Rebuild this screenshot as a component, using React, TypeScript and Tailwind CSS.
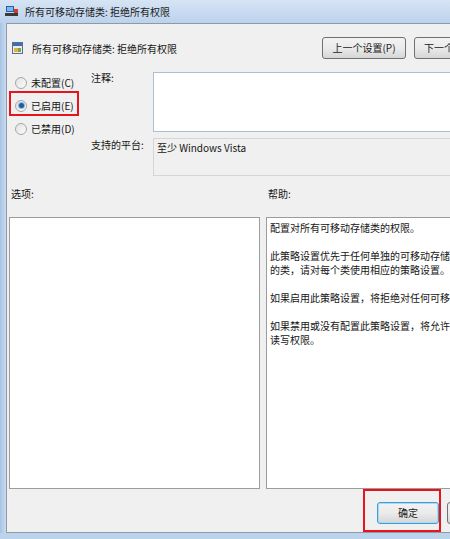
import React from 'react';

const font = "font-['Noto_Sans_CJK_SC','Noto_Sans',sans-serif]";

function Radio({ label, checked }: { label: string; checked?: boolean }) {
  return (
    <div className="flex h-[23px] items-center gap-[4px]">
      <span className="flex h-[12px] w-[12px] items-center justify-center rounded-full border border-[#a7a7a7] bg-gradient-to-br from-[#e2e2e2] to-[#fbfbfb]">
        {checked && <span className="h-[5px] w-[5px] rounded-full bg-[#1d5e9a] ring-1 ring-[#8dbbe4]" />}
      </span>
      <span>{label}</span>
    </div>
  );
}

function WinButton({ children, focused, w }: { children: React.ReactNode; focused?: boolean; w: string }) {
  return (
    <button
      className={`${w} h-[22px] rounded-[3px] border ${
        focused ? 'border-[#3c9fd6] shadow-[inset_0_0_0_1px_#a6dbf6]' : 'border-[#707070]'
      } bg-gradient-to-b from-[#f2f2f2] via-[#ebebeb] to-[#d6d6d6] text-[10px] leading-none text-[#1a1a1a]`}
    >
      {children}
    </button>
  );
}

export default function App() {
  const help = [
    '配置对所有可移动存储类的权限。',
    '',
    '此策略设置优先于任何单独的可移动存储设备',
    '的类，请对每个类使用相应的策略设置。',
    '',
    '如果启用此策略设置，将拒绝对任何可移动存储',
    '',
    '如果禁用或没有配置此策略设置，将允许对任何',
    '读写权限。',
  ];

  return (
    <div className={`${font} h-[539px] w-[450px] overflow-hidden bg-[#bcd3ec] text-[10px] text-[#161616]`}>
      {/* title bar */}
      <div className="flex h-[23px] items-center gap-[6px] bg-gradient-to-b from-[#d6e4f4] to-[#bcd2ec] pl-[5px]">
        <svg width="14" height="13" viewBox="0 0 14 13">
          <rect x="1" y="1" width="8" height="6" fill="#2a5fa8" />
          <rect x="2" y="2" width="6" height="4" fill="#7fb6ee" />
          <rect x="0" y="8" width="13" height="3" fill="#3a3a3a" />
          <rect x="9" y="4" width="4" height="4" fill="#d23a2a" />
        </svg>
        <span className="text-[#1b1b1b]">所有可移动存储类: 拒绝所有权限</span>
      </div>

      <div className="flex h-[510px]">
        <div className="w-[6px] shrink-0 bg-gradient-to-r from-[#a9c3e2] to-[#c8dcf1]" />
        {/* dialog body */}
        <div className="flex w-[560px] shrink-0 flex-col border border-[#8e9aa8] bg-[#f0f0f0]">
          {/* header */}
          <div className="mt-[13px] flex h-[22px] items-center">
            <div className="flex w-[315px] items-center gap-[9px] pl-[5px]">
              <svg width="11" height="12" viewBox="0 0 11 12">
                <rect x="0.5" y="0.5" width="10" height="11" fill="#e8eef6" stroke="#5a6f8c" />
                <rect x="1" y="1" width="9" height="3" fill="#3f6fb0" />
                <rect x="2" y="6" width="4" height="4" fill="#e3b341" />
                <rect x="6" y="6" width="3" height="4" fill="#7aa64a" />
              </svg>
              <span>所有可移动存储类: 拒绝所有权限</span>
            </div>
            <div className="flex gap-[8px]">
              <WinButton w="w-[84px]">上一个设置(P)</WinButton>
              <WinButton w="w-[84px]">下一个设置(N)</WinButton>
            </div>
          </div>

          {/* state + comment + platform */}
          <div className="flex">
            <div className="w-[84px] shrink-0 pl-[8px] pt-[12px]">
              <Radio label="未配置(C)" />
              <div className="relative">
                <Radio label="已启用(E)" checked />
                <div className="absolute -left-[6px] -top-[3px] h-[25px] w-[70px] border-2 border-[#e8141b]" />
              </div>
              <Radio label="已禁用(D)" />
            </div>
            <div className="flex flex-col gap-[6px] pt-[13px]">
              <div className="flex">
                <span className="w-[62px] shrink-0 leading-[12px]">注释:</span>
                <div className="h-[60px] w-[400px] border border-[#abc0d8] bg-white" />
              </div>
              <div className="flex">
                <span className="w-[62px] shrink-0 pt-[1px] leading-[12px]">支持的平台:</span>
                <div className="h-[38px] w-[400px] border border-[#d5d5d5] bg-[#f0f0f0] px-[3px] pt-[2px] leading-[14px]">
                  至少 Windows Vista
                </div>
              </div>
            </div>
          </div>

          {/* options / help */}
          <div className="mt-[11px] flex gap-[6px] pl-[2px] leading-[14px]">
            <span className="w-[251px] pl-[2px]">选项:</span>
            <span className="pl-[2px]">帮助:</span>
          </div>
          <div className="mt-[16px] flex gap-[6px] pl-[2px]">
            <div className="h-[272px] w-[251px] border border-[#9c9c9c] bg-white" />
            <div className="h-[272px] w-[290px] overflow-hidden border border-[#9c9c9c] bg-white px-[3px] pt-[3px] leading-[14px]">
              {help.map((line, i) => (
                <div key={i} className="h-[14px] whitespace-pre">
                  {line}
                </div>
              ))}
            </div>
          </div>

          {/* footer buttons */}
          <div className="flex flex-1 items-start pl-[370px] pt-[13px]">
            <div className="relative">
              <WinButton w="w-[62px]" focused>
                确定
              </WinButton>
              <div className="absolute -left-[14px] -top-[13px] h-[43px] w-[78px] border-2 border-[#e8141b]" />
            </div>
            <div className="ml-[8px]">
              <WinButton w="w-[62px]">取消</WinButton>
            </div>
          </div>
        </div>
      </div>
    </div>
  );
}
